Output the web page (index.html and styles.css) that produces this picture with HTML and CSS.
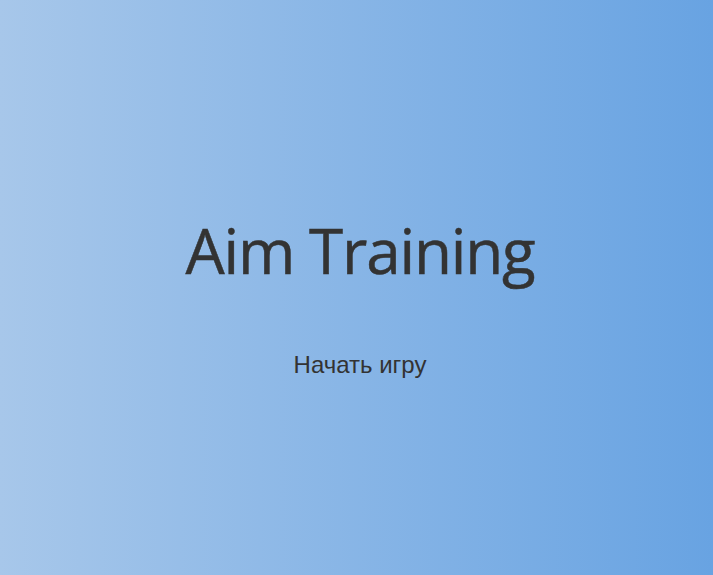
FILE: index.html
```html
<!DOCTYPE html>
<html lang="ru">
<head>
<meta charset="utf-8">
<title>Aim Training</title>
<link rel="stylesheet" href="styles.css">
</head>
<body>
<main class="screen">
  <h1 class="title">Aim Training</h1>
  <a href="#" class="start">Начать игру</a>
</main>
</body>
</html>
```
FILE: styles.css
```css
html, body {
  margin: 0;
  padding: 0;
  height: 100%;
}
body {
  background: linear-gradient(90deg, #a7c7ea 0%, #68a3e2 100%);
  color: #333;
}
.screen {
  box-sizing: border-box;
  height: 100vh;
  padding: 12px 0 0 7px;
  display: flex;
  flex-direction: column;
  align-items: center;
  justify-content: center;
}
.title {
  font-family: "Open Sans", sans-serif;
  font-weight: 400;
  font-size: 62px;
  letter-spacing: -1.2px;
  line-height: 1.2;
  margin: 5px 0 64px;
  color: #333;
  -webkit-text-stroke: 0.5px #333;
}
.start {
  font-family: "Liberation Sans", Arial, sans-serif;
  font-size: 24px;
  color: #333;
  text-decoration: none;
}
```
